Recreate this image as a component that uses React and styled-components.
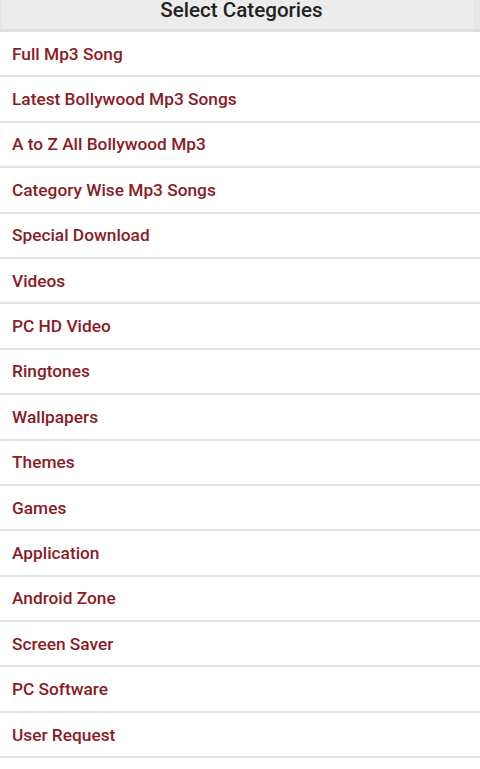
import React from "react";
import styled, { createGlobalStyle } from "styled-components";

const Global = createGlobalStyle`
  html, body { margin: 0; padding: 0; background: #fff; }
  body { font-family: Roboto, "Noto Sans", Arial, sans-serif; }
`;

const Page = styled.div`
  width: 480px;
  display: flex;
  flex-direction: column;
`;

const Header = styled.div`
  height: 29px;
  background: #ececec;
  border-bottom: 3px solid #dedede;
  border-left: 1px solid #e2e2e2;
  box-shadow: inset -7px 0 0 #e6e6e6;
  text-align: center;
  font-size: 20.6px;
  font-weight: 500;
  color: #222;
  line-height: 20px;
  padding-left: 2px;
`;

const List = styled.ul`
  list-style: none;
  margin: 0;
  padding: 0;
`;

const Row = styled.li`
  height: 43.4px;
  border-bottom: 2px solid #e3e3e3;
  display: flex;
  align-items: center;
  padding-left: 12px;
  font-size: 17.3px;
  font-weight: 500;
  color: #8a1b25;
`;

const items = [
  "Full Mp3 Song",
  "Latest Bollywood Mp3 Songs",
  "A to Z All Bollywood Mp3",
  "Category Wise Mp3 Songs",
  "Special Download",
  "Videos",
  "PC HD Video",
  "Ringtones",
  "Wallpapers",
  "Themes",
  "Games",
  "Application",
  "Android Zone",
  "Screen Saver",
  "PC Software",
  "User Request",
];

export default function App() {
  return (
    <>
      <Global />
      <Page>
        <Header>Select Categories</Header>
        <List>
          {items.map((t) => (
            <Row key={t}>{t}</Row>
          ))}
        </List>
      </Page>
    </>
  );
}
